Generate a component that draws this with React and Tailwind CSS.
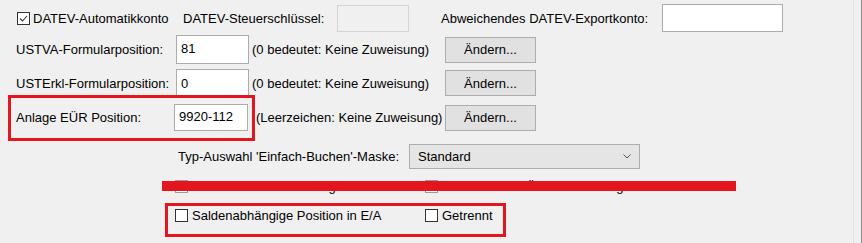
import React from "react";

function Box({ checked, dim }) {
  return (
    <span
      className={`inline-flex w-[13px] h-[13px] shrink-0 items-center justify-center bg-white border ${dim ? "border-[#9a9a9a]" : "border-[#333333]"}`}
    >
      {checked && (
        <svg width="11" height="11" viewBox="0 0 11 11">
          <path d="M2 5.5 L4.5 8 L9 3" fill="none" stroke="#333" strokeWidth="1.1" />
        </svg>
      )}
    </span>
  );
}

function Btn() {
  return (
    <div className="w-[91px] h-[26px] bg-[#e1e1e1] border border-[#adadad] flex items-center justify-center">
      Ändern...
    </div>
  );
}

export default function App() {
  return (
    <div
      className="relative w-[862px] h-[243px] overflow-hidden bg-[#f0f0f0] text-[13px] text-black leading-none"
      style={{ fontFamily: '"Liberation Sans", Arial, sans-serif' }}
    >
      <div className="absolute right-[8px] top-0 bottom-0 w-px bg-[#e2e2e2]" />
      <div className="absolute right-0 top-0 bottom-0 w-px bg-[#8a8a8a]" />

      <div className="flex flex-col">
        {/* Row 1 */}
        <div className="flex items-center h-[28px] mt-[4px]">
          <div className="w-[166px] ml-[17px] flex items-center gap-[3px]">
            <Box checked />
            <span>DATEV-Automatikkonto</span>
          </div>
          <div className="w-[154px]">DATEV-Steuerschlüssel:</div>
          <div className="w-[72px] h-[27px] border border-[#d4d4d4] bg-[#f0f0f0]" />
          <div className="w-[221px] ml-[32px]">Abweichendes DATEV-Exportkonto:</div>
          <div className="w-[121px] h-[28px] border border-[#acacac] bg-white" />
        </div>

        {/* Row 2 */}
        <div className="flex items-center h-[29px] mt-[3px]">
          <div className="w-[160px] ml-[16px]">USTVA-Formularposition:</div>
          <div className="w-[73px] h-[29px] border border-[#acacac] bg-white pl-[4px] pt-[6px]">81</div>
          <div className="w-[193px] ml-[3px]">(0 bedeutet: Keine Zuweisung)</div>
          <Btn />
        </div>

        {/* Row 3 */}
        <div className="flex items-center h-[28px] mt-[5px]">
          <div className="w-[160px] ml-[16px]">USTErkl-Formularposition:</div>
          <div className="w-[73px] h-[28px] border border-[#acacac] bg-white pl-[4px] pt-[7px]">0</div>
          <div className="w-[193px] ml-[3px]">(0 bedeutet: Keine Zuweisung)</div>
          <Btn />
        </div>

        {/* Row 4 */}
        <div className="flex items-center h-[27px] mt-[7px]">
          <div className="w-[158px] ml-[16px]">Anlage EÜR Position:</div>
          <div className="w-[74px] h-[27px] border border-[#acacac] bg-white pl-[4px] pt-[5px]">9920-112</div>
          <div className="w-[189px] ml-[8px]">(Leerzeichen: Keine Zuweisung)</div>
          <Btn />
        </div>

        {/* Row 5 */}
        <div className="flex items-center h-[25px] mt-[13px]">
          <div className="w-[231px] ml-[178px]">Typ-Auswahl 'Einfach-Buchen'-Maske:</div>
          <div className="w-[231px] h-[25px] bg-[#e5e5e5] border border-[#adadad] flex items-center justify-between pl-[8px] pr-[8px]">
            <span>Standard</span>
            <svg width="8" height="5" viewBox="0 0 8 5">
              <path d="M0.5 0.5 L4 4 L7.5 0.5" fill="none" stroke="#555" strokeWidth="1" />
            </svg>
          </div>
        </div>

        {/* Row 6 (struck) */}
        <div className="flex items-center h-[14px] mt-[10px]">
          <div className="w-[250px] ml-[175px] flex items-center gap-[4px]">
            <Box dim />
            <span>In Plankalkulation anzeigen/ändern</span>
          </div>
          <div className="flex items-center gap-[4px]">
            <Box dim />
            <span>In Einnahmen-Übersicht anzeigen/ändern</span>
          </div>
        </div>

        {/* Row 7 */}
        <div className="flex items-center h-[14px] mt-[15px]">
          <div className="w-[250px] ml-[175px] flex items-center gap-[4px]">
            <Box />
            <span>Saldenabhängige Position in E/A</span>
          </div>
          <div className="flex items-center gap-[4px]">
            <Box />
            <span>Getrennt</span>
          </div>
        </div>
      </div>

      {/* Red annotations */}
      <div className="absolute left-[8px] top-[95px] w-[247px] h-[46px] border-[3px] border-[#e3151f]" />
      <div className="absolute left-[162px] top-[181px] w-[574px] h-[10px] bg-[#e3151f]" />
      <div className="absolute left-[165px] top-[203px] w-[341px] h-[34px] border-[3px] border-[#e3151f]" />
    </div>
  );
}
